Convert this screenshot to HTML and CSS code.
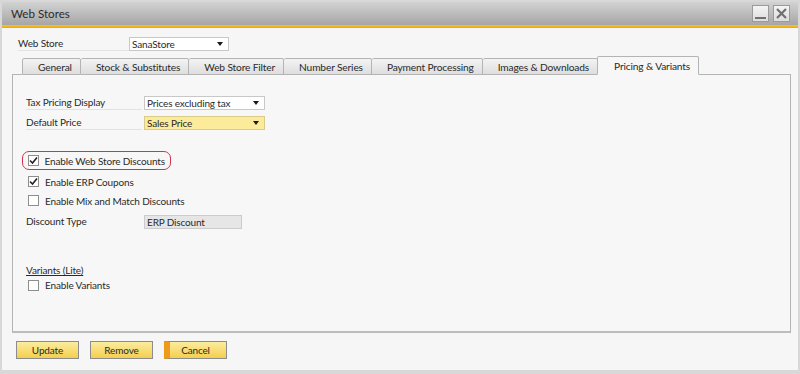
FILE: index.html
```html
<!DOCTYPE html>
<html>
<head>
<meta charset="utf-8">
<link rel="stylesheet" href="styles.css">
</head>
<body>
<div class="window">
  <div class="titlebar">
    <span class="title">Web Stores</span>
    <div class="winbtns">
      <span class="winbtn"><svg width="11" height="11" viewBox="0 0 11 11"><rect x="0" y="9" width="11" height="2" fill="#707070"/></svg></span>
      <span class="winbtn"><svg width="11" height="11" viewBox="0 0 11 11"><path d="M1 1 L10 10 M10 1 L1 10" stroke="#707070" stroke-width="2.2"/></svg></span>
    </div>
  </div>
  <div class="accent"></div>
  <div class="content">
    <div class="store-row">
      <span class="store-label">Web Store</span>
      <span class="combo store-combo">SanaStore<i class="arrow"></i></span>
    </div>
    <div class="tabs">
      <span class="tab">General</span>
      <span class="tab">Stock &amp; Substitutes</span>
      <span class="tab">Web Store Filter</span>
      <span class="tab">Number Series</span>
      <span class="tab">Payment Processing</span>
      <span class="tab">Images &amp; Downloads</span>
      <span class="tab active">Pricing &amp; Variants</span>
      <span class="tab-rest"></span>
    </div>
    <div class="panel">
      <div class="field">
        <span class="flabel">Tax Pricing Display</span>
        <span class="combo wide">Prices excluding tax<i class="arrow"></i></span>
      </div>
      <div class="field">
        <span class="flabel">Default Price</span>
        <span class="combo wide yellow">Sales Price<i class="arrow"></i></span>
      </div>
      <div class="checks">
        <div class="check highlight"><span class="box"><svg width="9" height="9" viewBox="0 0 9 9"><path d="M1 4.5 L3.5 7 L8 1.5" fill="none" stroke="#222" stroke-width="1.6"/></svg></span>Enable Web Store Discounts</div>
        <div class="check"><span class="box"><svg width="9" height="9" viewBox="0 0 9 9"><path d="M1 4.5 L3.5 7 L8 1.5" fill="none" stroke="#222" stroke-width="1.6"/></svg></span>Enable ERP Coupons</div>
        <div class="check"><span class="box"></span>Enable Mix and Match Discounts</div>
      </div>
      <div class="field dtype">
        <span class="flabel plain">Discount Type</span>
        <span class="readonly">ERP Discount</span>
      </div>
      <div class="variants">
        <div class="section-title">Variants (Lite)</div>
        <div class="check"><span class="box"></span>Enable Variants</div>
      </div>
    </div>
    <div class="buttons">
      <span class="btn">Update</span>
      <span class="btn">Remove</span>
      <span class="btn cancel">Cancel</span>
    </div>
  </div>
</div>
</body>
</html>
```

FILE: styles.css
```css
html, body {
  margin: 0;
  padding: 0;
  background: #ffffff;
}
body {
  font-family: Lato, "Open Sans", sans-serif;
  font-size: 10px;
  letter-spacing: -0.15px;
  color: #2a2a2a;
}
.window {
  width: 800px;
  height: 374px;
  box-sizing: border-box;
  border: 2px solid #d8d8d8;
  border-bottom-width: 4px;
  background: #f6f6f6;
  display: flex;
  flex-direction: column;
}
.titlebar {
  height: 23px;
  background: linear-gradient(#d2d2d2, #a6a6a6);
  display: flex;
  align-items: center;
  justify-content: space-between;
  padding: 0 8px 0 9px;
}
.title {
  font-size: 11.6px;
  letter-spacing: 0;
  color: #2b2b2b;
}
.winbtns {
  display: flex;
  gap: 4px;
}
.winbtn {
  width: 15px;
  height: 15px;
  border: 1px solid #9a9a9a;
  background: linear-gradient(#f4f4f4, #dcdcdc);
  display: flex;
  align-items: center;
  justify-content: center;
}
.accent {
  height: 3px;
  background: linear-gradient(#f7c32a, #f0a800);
}
.content {
  flex: 1;
  display: flex;
  flex-direction: column;
  padding: 9px 0 0 10px;
}
.store-row {
  display: flex;
  align-items: center;
  height: 14px;
  padding-left: 6px;
}
.store-label {
  width: 111px;
  height: 13px;
  line-height: 12px;
  border-bottom: 1px solid #e4e4e4;
}
.combo {
  position: relative;
  box-sizing: border-box;
  height: 14px;
  line-height: 12px;
  background: #ffffff;
  border: 1px solid #c8c8c8;
  padding-left: 2px;
}
.store-combo {
  width: 100px;
}
.arrow {
  position: absolute;
  right: 5px;
  top: 4px;
  width: 0;
  height: 0;
  border-left: 3.5px solid transparent;
  border-right: 3.5px solid transparent;
  border-top: 4px solid #1a1a1a;
}
.tabs {
  display: flex;
  align-items: flex-end;
  margin-top: 6px;
  height: 18px;
}
.tabs::before {
  content: "";
  width: 10px;
  align-self: flex-end;
  border-bottom: 1px solid #b4b4b4;
}
.tab {
  box-sizing: border-box;
  height: 17px;
  line-height: 16px;
  font-size: 10.2px;
  padding: 0 8px 0 15px;
  border: 1px solid #b4b4b4;
  border-left-width: 0;
  background: linear-gradient(#f3f3f3, #dedede);
  border-radius: 2px 2px 0 0;
}
.tab:first-of-type {
  border-left-width: 1px;
}
.tab.active {
  height: 19px;
  line-height: 18px;
  background: #f7f7f7;
  border-bottom-color: #f7f7f7;
  border-left-width: 1px;
  margin-left: -1px;
  padding-left: 16px;
}
.tab-rest {
  flex: 1;
  margin-right: 7px;
  border-bottom: 1px solid #b4b4b4;
}
.panel {
  box-sizing: border-box;
  height: 258px;
  margin-right: 7px;
  border: 1px solid #b4b4b4;
  border-top: 0;
  border-bottom: 2px solid #bcbcbc;
  background: #f7f7f7;
  padding: 21px 0 0 13px;
  display: flex;
  flex-direction: column;
}
.field {
  display: flex;
  align-items: center;
  height: 14px;
  margin-bottom: 6px;
}
.flabel {
  width: 116px;
  height: 13px;
  line-height: 12px;
  border-bottom: 1px solid #e2e2e2;
  margin-right: 2px;
}
.flabel.plain {
  border-bottom-color: transparent;
}
.combo.wide {
  width: 121px;
}
.combo.yellow {
  background: #fbeb9b;
  border-color: #d8cc8a;
}
.checks {
  margin-top: 15px;
  margin-left: -4px;
  display: flex;
  flex-direction: column;
}
.check {
  display: flex;
  align-items: center;
  height: 19px;
  padding-left: 6px;
  white-space: nowrap;
}
.highlight {
  width: 149px;
  box-sizing: border-box;
  height: 19px;
  border: 1.5px solid #d2344f;
  border-radius: 7px;
  padding-left: 4.5px;
  margin-bottom: 2px;
}
.box {
  box-sizing: border-box;
  width: 11px;
  height: 11px;
  border: 1px solid #8e8e8e;
  background: #ffffff;
  margin-right: 6px;
  display: flex;
  align-items: center;
  justify-content: center;
}
.dtype {
  margin-top: 5px;
}
.readonly {
  box-sizing: border-box;
  width: 98px;
  height: 14px;
  line-height: 12px;
  padding-left: 2px;
  background: #e6e6e6;
  border: 1px solid #cbcbcb;
}
.variants {
  margin-top: 29px;
  margin-left: -4px;
}
.section-title {
  text-decoration: underline;
  padding-left: 4px;
  height: 13px;
  line-height: 12px;
}
.variants .check {
  height: 16px;
}
.buttons {
  display: flex;
  gap: 11px;
  padding: 8px 0 0 4px;
}
.btn {
  box-sizing: border-box;
  width: 63px;
  height: 18px;
  line-height: 16px;
  text-align: center;
  border: 1px solid #8c8c8c;
  background: linear-gradient(#fcec9f, #f3cf4e);
  color: #2a2a2a;
}
.btn.cancel {
  border-left: 6px solid #f09a1a;
  padding-right: 5px;
}
```
